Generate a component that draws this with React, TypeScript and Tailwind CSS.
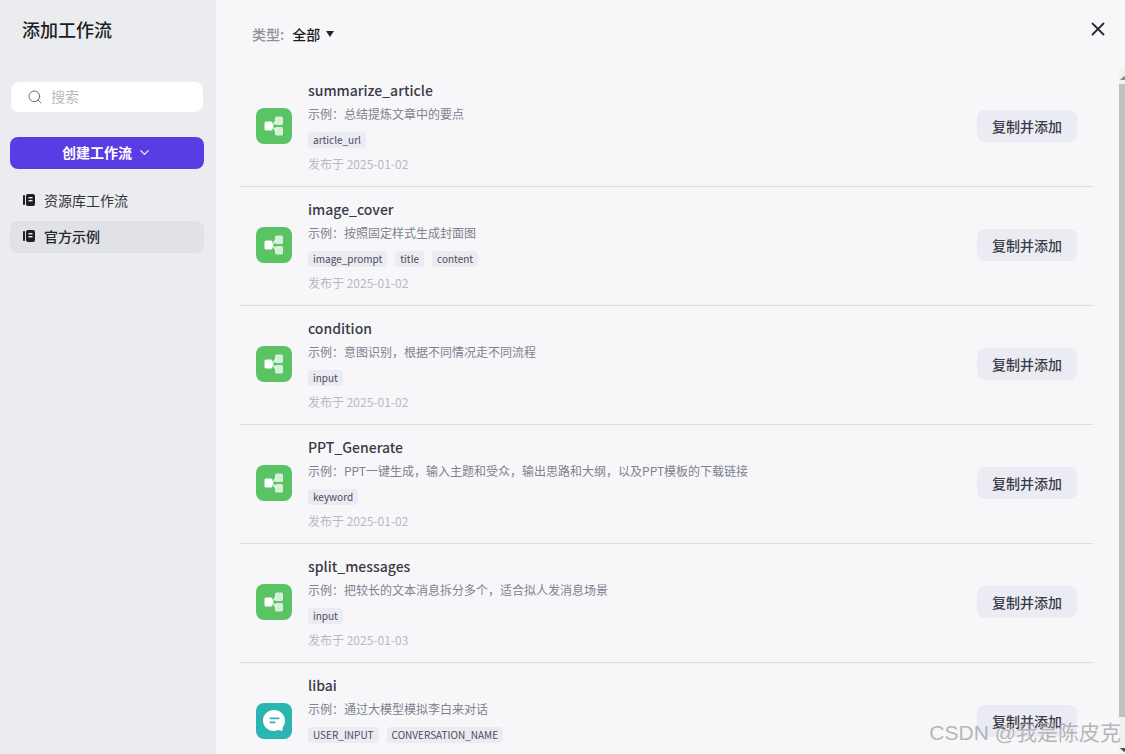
import { Search, ChevronDown, X } from "lucide-react";

const rows = [
  { name: "summarize_article", desc: "示例\uFF1A总结提炼文章中的要点", tags: ["article_url"], date: "发布于 2025-01-02", kind: "flow" },
  { name: "image_cover", desc: "示例\uFF1A按照固定样式生成封面图", tags: ["image_prompt", "title", "content"], date: "发布于 2025-01-02", kind: "flow" },
  { name: "condition", desc: "示例\uFF1A意图识别\uFF0C根据不同情况走不同流程", tags: ["input"], date: "发布于 2025-01-02", kind: "flow" },
  { name: "PPT_Generate", desc: "示例\uFF1APPT一键生成\uFF0C输入主题和受众\uFF0C输出思路和大纲\uFF0C以及PPT模板的下载链接", tags: ["keyword"], date: "发布于 2025-01-02", kind: "flow" },
  { name: "split_messages", desc: "示例\uFF1A把较长的文本消息拆分多个\uFF0C适合拟人发消息场景", tags: ["input"], date: "发布于 2025-01-03", kind: "flow" },
  { name: "libai", desc: "示例\uFF1A通过大模型模拟李白来对话", tags: ["USER_INPUT", "CONVERSATION_NAME"], date: "\u00a0", kind: "chat" },
];

function BookIcon() {
  return (
    <svg width="12" height="12" viewBox="0 0 12 12" className="shrink-0">
      <rect x="0" y="1" width="2" height="10" rx="0.8" fill="#1f2024" />
      <rect x="3" y="0" width="9" height="12" rx="2" fill="#1f2024" />
      <rect x="5.5" y="3" width="4" height="1.4" fill="#ebecf0" />
      <rect x="5.5" y="6" width="4" height="1.4" fill="#ebecf0" />
    </svg>
  );
}

function FlowIcon() {
  return (
    <div className="w-9 h-9 rounded-lg bg-[#5ac464] flex items-center justify-center shrink-0">
      <svg width="20" height="20" viewBox="0 0 20 20">
        <path d="M8 10 L12 5 M8 10 L12 15" stroke="#ffffff" strokeWidth="1.6" fill="none" opacity="0.8" />
        <rect x="0.5" y="5.5" width="8" height="9" rx="1.5" fill="#ffffff" />
        <rect x="11" y="0.5" width="8" height="8.5" rx="1.5" fill="#ffffff" fillOpacity="0.75" />
        <rect x="11" y="11" width="8" height="8.5" rx="1.5" fill="#ffffff" fillOpacity="0.75" />
      </svg>
    </div>
  );
}

function ChatIcon() {
  return (
    <div className="w-9 h-9 rounded-lg bg-[#2bb5b0] flex items-center justify-center shrink-0">
      <svg width="22" height="22" viewBox="0 0 22 22">
        <path d="M11 0 C17 0 22 4.5 22 10.5 C22 13.5 21 16 19.5 17.5 L19.5 21 L15 20 C13.7 20.6 12.4 21 11 21 C5 21 0 16.5 0 10.5 C0 4.5 5 0 11 0 Z" fill="#ffffff" />
        <rect x="6.5" y="7.5" width="10" height="1.7" rx="0.85" fill="#2bb5b0" />
        <rect x="6.5" y="11.5" width="6" height="1.7" rx="0.85" fill="#2bb5b0" />
      </svg>
    </div>
  );
}

export default function App() {
  return (
    <div className="relative w-[1125px] h-[754px] overflow-hidden flex bg-[#f7f7fa] font-['Noto_Sans_CJK_SC','Noto_Sans',sans-serif] text-[#1f2024]">
      <aside className="w-[216px] shrink-0 bg-[#ebecf0] flex flex-col pl-[10px] pr-[12px]">
        <h1 className="mt-[16px] ml-[12px] text-[18px] leading-[26px] font-medium text-[#1c1d23]">添加工作流</h1>
        <div className="mt-[40px] h-[30px] mx-[1px] pb-[1px] rounded-lg bg-white flex items-center pl-[16px] gap-[8px]">
          <Search size={16} strokeWidth={1.5} className="text-[#6b6d75]" />
          <span className="text-[14px] text-[#b9bac0]">搜索</span>
        </div>
        <button className="mt-[25px] h-[32px] pb-[2px] rounded-lg bg-[#5a3ce4] text-white text-[14px] font-bold flex items-center justify-center gap-[5px]">
          创建工作流
          <ChevronDown size={15} strokeWidth={1.75} />
        </button>
        <div className="mt-[16px] h-[32px] pb-[2px] flex items-center pl-[13px] gap-[9px] text-[14px] text-[#33343b]">
          <BookIcon />
          资源库工作流
        </div>
        <div className="mt-[4px] h-[32px] pb-[2px] flex items-center pl-[13px] gap-[9px] rounded-lg bg-[#e1e2e7] text-[14px] font-medium text-[#26272d]">
          <BookIcon />
          官方示例
        </div>
      </aside>
      <main className="flex-1 min-w-0 flex flex-col">
        <div className="h-[68px] shrink-0 flex items-start pl-[36px] pr-[16px] pt-[24px] text-[14px] leading-[20px]">
          <span className="text-[#8f9097] font-medium">类型:</span>
          <span className="ml-[8px] font-medium text-[#1c1d23]">全部</span>
          <span className="ml-[6px] mt-[7px] w-0 h-0 border-x-[4px] border-x-transparent border-t-[6px] border-t-[#26272d]" />
          <X size={22} strokeWidth={2} className="ml-auto mt-[-6px] text-[#2a2b33]" />
        </div>
        <div className="flex-1 min-h-0 overflow-hidden pl-[24px] pr-[32px]">
          {rows.map((r, i) => (
            <div key={r.name} className={`h-[119px] pb-[2px] border-b flex items-center pl-[16px] pr-[16px] ${i < rows.length - 1 ? "border-[#dcdde0]" : "border-transparent"}`}>
              {r.kind === "flow" ? <FlowIcon /> : <ChatIcon />}
              <div className="ml-[16px] flex-1 min-w-0 flex flex-col">
                <div className="text-[14px] leading-[20px] font-medium text-[#3a3b47]">{r.name}</div>
                <div className="mt-[5px] text-[12px] leading-[18px] text-[#80818d]">{r.desc}</div>
                <div className="mt-[9px] flex gap-[8px]">
                  {r.tags.map((t) => (
                    <span key={t} className="h-[16px] px-[5px] rounded bg-[#ebebf3] text-[10px] leading-[16px] text-[#4a4b58]">{t}</span>
                  ))}
                </div>
                <div className="mt-[7px] text-[12px] leading-[18px] text-[#b8b9c4]">{r.date}</div>
              </div>
              <button className="w-[100px] h-[32px] rounded-lg bg-[#ebebf3] text-[14px] font-medium text-[#3a3b47] shrink-0">复制并添加</button>
            </div>
          ))}
        </div>
      </main>
      <div className="absolute right-0 top-[68px] bottom-0 w-[6px] bg-[#f1f1f1] overflow-hidden">
        <div className="absolute right-[-3px] top-[8px] w-0 h-0 border-x-[4px] border-x-transparent border-b-[4px] border-b-[#8a8a8a]" />
        <div className="mt-[16px] h-[633px] bg-[#c1c1c1]" />
        <div className="absolute right-[-3px] bottom-[2px] w-0 h-0 border-x-[4px] border-x-transparent border-t-[4px] border-t-[#505050]" />
      </div>
      <div className="absolute right-[4px] bottom-[7px] text-[21px] leading-[28px] text-[#a5a5a5]/80 font-['Liberation_Sans','Noto_Sans_CJK_SC',sans-serif]">CSDN @我是陈皮克</div>
    </div>
  );
}
